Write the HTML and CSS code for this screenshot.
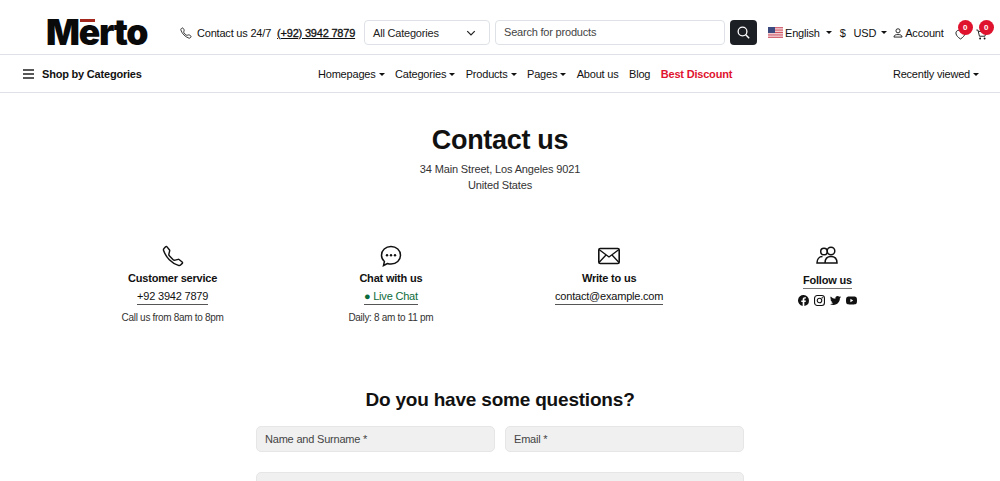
FILE: index.html
```html
<!DOCTYPE html>
<html lang="en">
<head>
    <meta charset="UTF-8">
    <title>Contact us</title>
    <link rel="stylesheet" href="styles.css">
</head>
<body>
    <header class="topbar">
        <a class="logo" href="#">M<span class="logo-e">e</span>rto</a>
        <div class="hotline">
            <svg class="hotline-icon" viewBox="0 0 16 16" width="12" height="12"><path d="M3.65 1.33a.68.68 0 0 0-1.02-.06L1.6 2.3c-.48.48-.66 1.16-.45 1.76a17.6 17.6 0 0 0 4.17 6.62 17.6 17.6 0 0 0 6.62 4.17c.6.21 1.28.03 1.76-.45l1.03-1.03a.68.68 0 0 0-.06-1.02l-2.3-1.79a.68.68 0 0 0-.58-.12l-2.18.55a1.75 1.75 0 0 1-1.66-.46L5.5 8.08a1.75 1.75 0 0 1-.46-1.66l.55-2.18a.68.68 0 0 0-.12-.58z" fill="none" stroke="#111" stroke-width="1.1"/></svg>
            <span>Contact us 24/7</span>
            <a class="hotline-phone" href="#">(+92) 3942 7879</a>
        </div>
        <div class="category-select">
            <span>All Categories</span>
            <svg viewBox="0 0 16 16" width="10" height="10"><path d="M2 5l6 6 6-6" fill="none" stroke="#222" stroke-width="2"/></svg>
        </div>
        <div class="search-box">Search for products</div>
        <button class="search-btn" type="button">
            <svg viewBox="0 0 16 16" width="13" height="13"><circle cx="6.8" cy="6.8" r="5.4" fill="none" stroke="#fff" stroke-width="1.6"/><path d="M10.8 10.8L15 15" stroke="#fff" stroke-width="1.8"/></svg>
        </button>
        <div class="top-links">
            <a class="top-link lang" href="#">
                <svg class="flag" viewBox="0 0 15 11" width="15" height="11"><rect width="15" height="11" fill="#fff"/><path d="M0 .4h15M0 2.1h15M0 3.8h15M0 5.5h15M0 7.2h15M0 8.9h15M0 10.6h15" stroke="#c8384a" stroke-width=".85"/><rect width="7" height="6" fill="#3c4a80"/></svg>
                English<i class="caret caret-wide"></i>
            </a>
            <a class="top-link currency" href="#"><span class="dollar">$</span>USD<i class="caret"></i></a>
            <a class="top-link account" href="#">
                <svg viewBox="0 0 16 16" width="10" height="10"><circle cx="8" cy="4.5" r="3.3" fill="none" stroke="#111" stroke-width="1.4"/><path d="M1.5 14.5c0-3 2.5-4 6.5-4s6.500 1 6.500 4z" fill="none" stroke="#111" stroke-width="1.4"/></svg>
                Account
            </a>
            <a class="icon-link wish" href="#">
                <svg viewBox="0 0 16 16" width="11" height="11"><path d="M8 14.500C-4 7 3-1 8 3.200 13-1 20 7 8 14.500z" fill="none" stroke="#111" stroke-width="1.300"/></svg>
                <span class="badge">0</span>
            </a>
            <a class="icon-link cart" href="#">
                <svg viewBox="0 0 16 16" width="11" height="11"><path d="M.5 1.500h2.300l2.200 9h8l1.800-7H3.500" fill="none" stroke="#111" stroke-width="1.300"/><circle cx="6" cy="13.800" r="1.400" fill="#111"/><circle cx="12.500" cy="13.800" r="1.400" fill="#111"/></svg>
                <span class="badge">0</span>
            </a>
        </div>
    </header>

    <nav class="navbar">
        <a class="shop-by" href="#">
            <svg viewBox="0 0 11 10" width="11" height="10"><path d="M0 1h11M0 5h11M0 9h11" stroke="#222" stroke-width="1.400"/></svg>
            Shop by Categories
        </a>
        <div class="nav-links">
            <a href="#">Homepages<i class="caret"></i></a>
            <a href="#">Categories<i class="caret"></i></a>
            <a href="#">Products<i class="caret"></i></a>
            <a href="#">Pages<i class="caret"></i></a>
            <a href="#">About us</a>
            <a href="#">Blog</a>
            <a class="discount" href="#">Best Discount</a>
        </div>
        <a class="recent" href="#">Recently viewed<i class="caret"></i></a>
    </nav>

    <main class="content">
        <h1>Contact us</h1>
        <p class="address">34 Main Street, Los Angeles 9021<br>United States</p>

        <div class="contact-grid">
            <div class="contact-col">
                <svg class="contact-icon" viewBox="0 0 16 16" width="22" height="22"><path d="M3.65 1.33a.68.68 0 0 0-1.02-.06L1.600 2.300c-.48.48-.66 1.160-.45 1.760a17.600 17.600 0 0 0 4.170 6.620 17.600 17.600 0 0 0 6.620 4.170c.6.21 1.280.03 1.760-.45l1.030-1.030a.68.68 0 0 0-.06-1.020l-2.300-1.790a.68.68 0 0 0-.58-.12l-2.180.55a1.750 1.750 0 0 1-1.660-.46L5.500 8.080a1.750 1.750 0 0 1-.46-1.660l.55-2.180a.68.68 0 0 0-.12-.58z" fill="none" stroke="#111" stroke-width="1.050"/></svg>
                <h3>Customer service</h3>
                <a class="contact-link" href="#">+92 3942 7879</a>
                <p class="contact-note">Call us from 8am to 8pm</p>
            </div>
            <div class="contact-col">
                <svg class="contact-icon" viewBox="0 0 22 22" width="22" height="22"><path d="M11 1.500c5.400 0 9.500 3.900 9.500 8.800s-4.100 8.800-9.500 8.800c-1.300 0-2.500-.2-3.600-.6L3.500 20.500l.9-4C2.500 14.900 1.500 12.700 1.500 10.300c0-4.900 4.100-8.800 9.500-8.800z" fill="none" stroke="#111" stroke-width="1.500"/><circle cx="7" cy="10.300" r="1.200" fill="#111"/><circle cx="11" cy="10.300" r="1.200" fill="#111"/><circle cx="15" cy="10.300" r="1.200" fill="#111"/></svg>
                <h3>Chat with us</h3>
                <a class="contact-link live" href="#">● Live Chat</a>
                <p class="contact-note">Daily: 8 am to 11 pm</p>
            </div>
            <div class="contact-col">
                <svg class="contact-icon" viewBox="0 0 22 22" width="22" height="22"><rect x=".8" y="3.500" width="20.400" height="15" rx="1.500" fill="none" stroke="#111" stroke-width="1.600"/><path d="M1 4.500l10 7.500 10-7.500M1 17.500l7-7.500M21 17.500l-7-7.500" fill="none" stroke="#111" stroke-width="1.300"/></svg>
                <h3>Write to us</h3>
                <a class="contact-link" href="#">contact@example.com</a>
            </div>
            <div class="contact-col follow">
                <svg class="contact-icon" viewBox="0 0 22 22" width="22" height="22"><circle cx="8" cy="6.500" r="3.300" fill="none" stroke="#111" stroke-width="1.500"/><circle cx="15" cy="6" r="3.800" fill="none" stroke="#111" stroke-width="1.500"/><path d="M8.500 18H1c0-3.500 2-6.500 5.500-6.500M9 18c0-4 2-6.500 6-6.500s6 2.500 6 6.500z" fill="none" stroke="#111" stroke-width="1.500"/></svg>
                <h3 class="follow-title">Follow us</h3>
                <div class="socials">
                    <svg viewBox="0 0 16 16" width="11" height="11"><path d="M16 8a8 8 0 1 0-9.250 7.900v-5.590H4.720V8h2.030V6.240c0-2 1.190-3.110 3.020-3.110.87 0 1.790.16 1.790.16v1.970h-1c-1 0-1.300.62-1.300 1.250V8h2.220l-.36 2.310H9.250v5.590A8 8 0 0 0 16 8z" fill="#111"/></svg>
                    <svg viewBox="0 0 16 16" width="11" height="11"><rect x=".8" y=".8" width="14.400" height="14.400" rx="4" fill="none" stroke="#111" stroke-width="1.600"/><circle cx="8" cy="8" r="3.300" fill="none" stroke="#111" stroke-width="1.600"/><circle cx="12" cy="4" r="1" fill="#111"/></svg>
                    <svg viewBox="0 0 16 16" width="11" height="11"><path d="M5.030 14.500c6.040 0 9.340-5 9.340-9.340 0-.14 0-.28-.01-.42A6.700 6.700 0 0 0 16 3.040a6.500 6.500 0 0 1-1.890.52 3.300 3.300 0 0 0 1.450-1.820 6.600 6.600 0 0 1-2.090.8 3.290 3.290 0 0 0-5.590 3A9.320 9.320 0 0 1 1.110 2.100a3.280 3.280 0 0 0 1.020 4.380A3.270 3.270 0 0 1 .64 6.070v.04a3.280 3.280 0 0 0 2.630 3.220 3.300 3.300 0 0 1-1.480.06 3.290 3.290 0 0 0 3.070 2.280A6.600 6.600 0 0 1 0 13.030a9.300 9.300 0 0 0 5.030 1.470z" fill="#111"/></svg>
                    <svg viewBox="0 0 16 16" width="11" height="11"><path d="M8 2.200c-2.500 0-4.700.1-5.700.3C1.200 2.700.5 3.500.3 4.600.1 5.700 0 6.800 0 8s.1 2.300.3 3.400c.2 1.100.9 1.900 2 2.100 1 .2 3.200.3 5.700.3s4.700-.1 5.700-.3c1.100-.2 1.800-1 2-2.100.2-1.100.3-2.200.3-3.400s-.1-2.300-.3-3.400c-.2-1.100-.9-1.900-2-2.100-1-.2-3.200-.3-5.700-.3z" fill="#111"/><path d="M6.400 5.600v4.800L10.500 8z" fill="#fff"/></svg>
                </div>
            </div>
        </div>

        <h2>Do you have some questions?</h2>
        <form class="question-form">
            <div class="form-row">
                <input class="field" type="text" placeholder="Name and Surname *">
                <input class="field" type="text" placeholder="Email *">
            </div>
            <textarea class="field field-area" placeholder=""></textarea>
        </form>
    </main>
</body>
</html>
```

FILE: styles.css
```css
html, body {
    height: 100%;
    overflow: hidden;
}
body {
    margin: 0;
    background: #fff;
    color: #111;
    font-family: "Liberation Sans", Arial, sans-serif;
    font-size: 11px;
    letter-spacing: -.2px;
}
a {
    color: inherit;
    text-decoration: none;
}
.caret {
    display: inline-block;
    margin-left: 3px;
    vertical-align: 2px;
    border-top: 3.5px solid #111;
    border-left: 3.5px solid transparent;
    border-right: 3.5px solid transparent;
}
.topbar {
    display: flex;
    align-items: center;
    height: 55px;
    padding: 11px 0 0 46px;
    box-sizing: border-box;
    border-bottom: 1px solid #dee2e6;
}
.topbar > * {
    flex: none;
}
.logo {
    width: 134px;
    font-family: Inter, "Liberation Sans", sans-serif;
    font-size: 35.5px;
    font-weight: 900;
    letter-spacing: -1.3px;
    color: #0a0a0a;
    line-height: 1;
}
.logo-e {
    position: relative;
}
.logo-e::before {
    content: "";
    position: absolute;
    left: 1px;
    right: 4px;
    top: 8px;
    height: 3px;
    background: #a3271c;
}
.hotline {
    display: flex;
    align-items: center;
    width: 184px;
    white-space: nowrap;
}
.hotline-icon {
    margin-right: 5px;
}
.hotline-phone {
    margin-left: 6px;
    font-weight: 500;
    text-decoration: underline;
    -webkit-text-stroke: 0.3px #111;
}
.category-select {
    display: flex;
    align-items: center;
    justify-content: space-between;
    width: 126px;
    height: 25px;
    padding: 0 13px 0 8px;
    box-sizing: border-box;
    border: 1px solid #dee2e6;
    border-radius: 4px;
    color: #222;
}
.search-box {
    width: 230px;
    height: 25px;
    margin-left: 5px;
    padding: 0 8px;
    box-sizing: border-box;
    line-height: 23px;
    border: 1px solid #dee2e6;
    border-radius: 4px;
    color: #444;
}
.search-btn {
    display: flex;
    align-items: center;
    justify-content: center;
    width: 27px;
    height: 25px;
    margin-left: 5px;
    padding: 0;
    border: 0;
    border-radius: 4px;
    background: #1c1f24;
}
.top-links {
    display: flex;
    align-items: center;
    margin-left: 11px;
}
.top-link {
    display: flex;
    align-items: center;
    white-space: nowrap;
}
.flag {
    margin-right: 2px;
}
.caret-wide {
    margin-left: 6px;
}
.currency {
    margin-left: 8px;
}
.currency .caret {
    margin-left: 5px;
}
.dollar {
    margin-right: 8px;
}
.account {
    margin-left: 6px;
}
.account svg {
    margin-right: 2px;
}
.icon-link {
    position: relative;
    display: flex;
    width: 11px;
    height: 11px;
    margin-top: 4px;
}
.wish {
    margin-left: 11px;
}
.cart {
    margin-left: 10px;
}
.badge {
    position: absolute;
    top: -9px;
    left: 3px;
    width: 15px;
    height: 15px;
    border-radius: 50%;
    background: #e0132e;
    color: #fff;
    font-size: 8px;
    font-weight: 700;
    line-height: 15px;
    text-align: center;
}
.navbar {
    display: flex;
    align-items: center;
    height: 38px;
    padding: 0 21px 0 23px;
    box-sizing: border-box;
    border-bottom: 1px solid #dee2e6;
}
.shop-by {
    display: flex;
    align-items: center;
    gap: 8px;
    width: 295px;
    font-weight: 700;
}
.nav-links {
    display: flex;
    gap: 10.5px;
    flex: 1;
}
.discount {
    color: #e0132e;
    font-weight: 700;
}
.content {
    text-align: center;
}
h1 {
    margin: 32px 0 0;
    font-size: 27px;
    letter-spacing: -.3px;
    line-height: 30px;
    font-weight: 700;
}
.address {
    margin: 6px 0 0;
    letter-spacing: -.15px;
    line-height: 16px;
    color: #333;
}
.contact-grid {
    display: grid;
    grid-template-columns: repeat(4, 218.25px);
    justify-content: center;
    margin-top: 52px;
    height: 143px;
}
.contact-col {
    display: flex;
    flex-direction: column;
    align-items: center;
}
.contact-icon {
    display: block;
}
h3 {
    margin: 4px 0 0;
    font-size: 11px;
    line-height: 14px;
    font-weight: 700;
}
.contact-link {
    margin-top: 4px;
    line-height: 15px;
    border-bottom: 1px solid #555;
}
.live {
    color: #0b6b3a;
}
.contact-note {
    margin: 6px 0 0;
    font-size: 10px;
    letter-spacing: -.3px;
    line-height: 14px;
    color: #333;
}
.follow-title {
    margin-top: 6px;
    padding-bottom: 1px;
    border-bottom: 1px solid #777;
}
.socials {
    display: flex;
    gap: 5px;
    margin-top: 6px;
}
h2 {
    margin: 0;
    font-size: 19px;
    line-height: 24px;
    font-weight: 700;
}
.question-form {
    width: 488px;
    margin: 14px auto 0;
}
.form-row {
    display: flex;
    gap: 10px;
    margin-bottom: 20px;
}
.field {
    flex: 1;
    min-width: 0;
    height: 26px;
    padding: 0 8px;
    box-sizing: border-box;
    background: #f0f0f0;
    border: 1px solid #e6e6e6;
    border-radius: 5px;
    font-family: inherit;
    font-size: 11px;
    letter-spacing: -.2px;
    color: #333;
}
.field::placeholder {
    color: #444;
    opacity: 1;
}
.field-area {
    display: block;
    width: 100%;
    height: 100px;
    resize: none;
}
```
